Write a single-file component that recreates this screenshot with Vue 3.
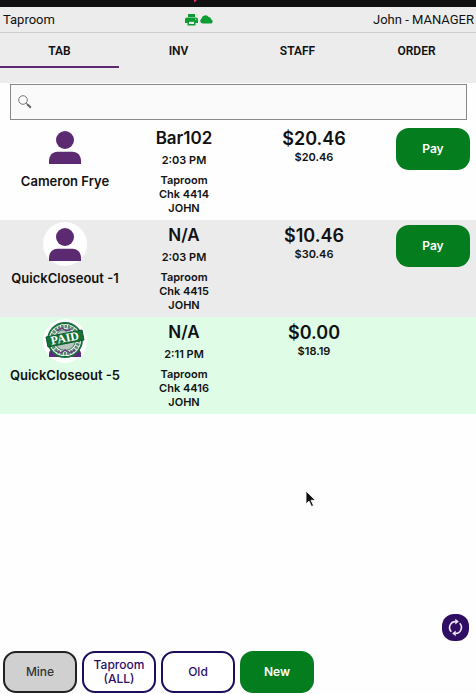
<script setup>
import { ref } from "vue";

const tabs = ["TAB", "INV", "STAFF", "ORDER"];
const activeTab = ref("TAB");
const search = ref("");
const filter = ref("Mine");

const checks = [
  { id: 4414, name: "Cameron Frye", table: "Bar102", time: "2:03 PM", due: "$20.46", total: "$20.46", paid: false },
  { id: 4415, name: "QuickCloseout -1", table: "N/A", time: "2:03 PM", due: "$10.46", total: "$30.46", paid: false },
  { id: 4416, name: "QuickCloseout -5", table: "N/A", time: "2:11 PM", due: "$0.00", total: "$18.19", paid: true },
];
</script>

<template>
  <div class="page">
    <div class="status">
      <svg width="4" height="2" viewBox="0 0 4 2"><path d="M0 0h3L1 2H0z" fill="#d8326c" /></svg>
    </div>
    <header class="header">
      <span>Taproom</span>
      <span class="header-icons">
        <svg width="13" height="12" viewBox="0 0 13 12" fill="#0c9c35">
          <path d="M3 0h7v3H3zM2 3.600h9a2 2 0 0 1 2 2V9h-2.500V7h-8v2H0V5.600a2 2 0 0 1 2-2zM2.500 7h8v4.500h-8z" />
          <path d="M4 7.800h5V10H4z" fill="#ececec" />
          <circle cx="10.700" cy="5.300" r=".6" fill="#ececec" />
        </svg>
        <svg width="13" height="9" viewBox="0 0 13 9" fill="#0c9c35">
          <path d="M3 8.500A2.600 2.600 0 0 1 1.500 3.700 4 4 0 0 1 8.700 2a2.700 2.700 0 0 1 2.500 2.600A2 2 0 0 1 11 8.500z" />
        </svg>
      </span>
      <span class="user">John - MANAGER</span>
    </header>

    <nav class="tabs">
      <button
        v-for="tab in tabs"
        :key="tab"
        :class="['tab', { active: activeTab === tab }]"
        @click="activeTab = tab"
      >
        {{ tab }}
      </button>
    </nav>

    <label class="search">
      <svg width="14" height="14" viewBox="0 0 14 14" fill="none">
        <circle cx="5" cy="5" r="4.300" stroke="#777" stroke-width="1" />
        <path d="M8.200 8.200l1.500 1.500" stroke="#777" stroke-width="1" />
        <path d="M9.700 9.700l2.500 2.300" stroke="#666" stroke-width="2.200" stroke-linecap="round" />
      </svg>
      <input v-model="search" type="text" aria-label="Search" />
    </label>

    <main class="list">
      <section v-for="check in checks" :key="check.id" :class="['row', { paid: check.paid }]">
        <div class="customer">
          <div class="avatar">
            <svg v-if="!check.paid" width="44" height="44" viewBox="0 0 44 44" fill="#5c2a70">
              <circle cx="22" cy="15" r="9" />
              <path d="M6 39v-3c0-5.500 3.500-9.300 8.500-9.300h15c5 0 8.500 3.800 8.500 9.300v3z" />
            </svg>
            <svg v-else width="44" height="44" viewBox="0 0 44 44">
              <path d="M6 38v-4q1-4 5-5h22q4 1 5 5v4z" fill="#5c2a80" />
              <circle cx="22" cy="21" r="17" fill="#f4f7f4" stroke="#16713a" stroke-width="1.800" />
              <circle cx="22" cy="21" r="13.500" fill="none" stroke="#5d8a73" stroke-width="3.500" stroke-dasharray="2.500 .8" />
              <circle cx="22" cy="21" r="10.500" fill="#b4c6bd" stroke="#3f7458" stroke-width="1" />
              <path d="M14 12l5-3 4 3 5-2M13 32l5 2 4-3 5 3 5-3" fill="none" stroke="#674680" stroke-width="1.500" />
              <path d="M3 18l36-7 2 10-36 7z" fill="#147239" stroke="#075b29" />
              <text x="22" y="23" text-anchor="middle" transform="rotate(-11 22 20)" class="stamp">PAID</text>
            </svg>
          </div>
          <div class="name">{{ check.name }}</div>
        </div>
        <div class="details">
          <div class="table-name">{{ check.table }}</div>
          <div class="time">{{ check.time }}</div>
          <div class="meta">
            <div>Taproom</div>
            <div>Chk {{ check.id }}</div>
            <div>JOHN</div>
          </div>
        </div>
        <div class="amounts">
          <div class="due">{{ check.due }}</div>
          <div class="total">{{ check.total }}</div>
        </div>
        <button v-if="!check.paid" class="btn green pay">Pay</button>
      </section>
    </main>

    <footer class="footer">
      <button class="refresh" aria-label="Refresh">
        <svg width="17" height="19" viewBox="0 0 17 19" fill="none" stroke="#f2e8fa" stroke-width="1.600">
          <path d="M4.300 13.800A6 6 0 0 1 8.500 3.600M12.700 5.200A6 6 0 0 1 8.500 15.400" />
          <path d="M8.500 1.300l3 2.300-3 2.300zM8.500 13.100l-3 2.300 3 2.300z" fill="#f2e8fa" stroke-width=".5" />
        </svg>
      </button>
      <div class="actions">
        <button :class="['btn', 'outline', { selected: filter === 'Mine' }]" @click="filter = 'Mine'">Mine</button>
        <button :class="['btn', 'outline', { selected: filter === 'All' }]" @click="filter = 'All'">Taproom (ALL)</button>
        <button :class="['btn', 'outline', { selected: filter === 'Old' }]" @click="filter = 'Old'">Old</button>
        <button class="btn green">New</button>
      </div>
    </footer>

    <svg class="cursor" width="12" height="18" viewBox="0 0 12 18">
      <path d="M1 1v13l3-3 2.500 5.500 2-1L6 10.300h4.300z" fill="#111" stroke="#fff" stroke-width=".8" />
    </svg>
  </div>
</template>

<style>
body {
  margin: 0;
  background-color: #fefefe;
}
</style>

<style scoped>
* {
  box-sizing: border-box;
}

.page {
  position: relative;
  display: flex;
  flex-direction: column;
  min-height: 100vh;
  background-color: #fefefe;
  color: #111;
  font-family: Inter, "Liberation Sans", sans-serif;
}

button {
  padding: 0;
  border: none;
  font-family: inherit;
  cursor: pointer;
}

.status {
  display: flex;
  justify-content: center;
  height: 7px;
  padding-right: 84px;
  background-color: #111;
}

.header {
  display: grid;
  grid-template-columns: 1fr auto 1fr;
  align-items: center;
  height: 26px;
  padding: 0 2px 0 3px;
  border-bottom: 1px solid #ccc;
  background-color: #ececec;
  font-family: Roboto, sans-serif;
  font-size: 13px;
}

.header-icons {
  display: flex;
  align-items: center;
  gap: 2px;
  padding-right: 80px;
}

.user {
  text-align: right;
}

.tabs {
  display: grid;
  grid-template-columns: repeat(4, 1fr);
  padding-bottom: 15px;
  background-color: #ececec;
}

.tab {
  height: 35px;
  padding-top: 2px;
  border-bottom: 2px solid transparent;
  background: none;
  color: #111;
  font-family: Roboto, sans-serif;
  font-size: 12px;
  font-weight: 600;
}

.tab.active {
  border-bottom-color: #5c2a70;
}

.search {
  display: flex;
  align-items: center;
  gap: 8px;
  height: 36px;
  margin: 1px 9px 3px 10px;
  padding: 0 7px;
  border: 1px solid #888;
  background-color: #fafafa;
}

.search input {
  flex: 1;
  min-width: 0;
  border: none;
  outline: none;
  background: none;
  font: inherit;
}

.row {
  display: grid;
  grid-template-columns: 130fr 108fr 152fr 80fr;
  height: 97px;
  padding-right: 6px;
  text-align: center;
}

.row:nth-child(even) {
  background-color: #ebebeb;
}

.row.paid {
  background-color: #dffce7;
}

.avatar {
  width: 44px;
  height: 44px;
  margin: 2px auto 3px;
  border-radius: 50%;
  background-color: #fefefe;
}

.avatar svg {
  display: block;
}

.stamp {
  fill: #fff;
  font-family: "Liberation Serif", serif;
  font-size: 12px;
  font-weight: 700;
}

.name {
  font-size: 13px;
  font-weight: 600;
  line-height: 18px;
}

.details,
.amounts {
  padding-top: 5px;
}

.table-name {
  font-size: 17px;
  font-weight: 600;
  line-height: 20px;
}

.time {
  margin: 5px 0;
  font-size: 11px;
  font-weight: 600;
  line-height: 15px;
}

.meta {
  font-size: 11px;
  font-weight: 600;
  line-height: 14px;
}

.due {
  font-size: 18px;
  font-weight: 600;
  line-height: 22px;
}

.total {
  font-size: 11px;
  font-weight: 600;
  line-height: 15px;
}

.btn {
  width: 74px;
  height: 42px;
  border-radius: 13px;
  font-size: 12px;
  font-weight: 500;
  line-height: 14px;
}

.green {
  background-color: #037d1d;
  color: #fff;
  font-weight: 600;
}

.pay {
  justify-self: end;
  margin-top: 5px;
}

.outline {
  border: 2px solid #1d0d5c;
  background-color: #fff;
  color: #2d0d68;
}

.outline.selected {
  border-color: #222;
  background-color: #d0d0d0;
  color: #333;
}

.footer {
  display: flex;
  flex-direction: column;
  gap: 10px;
  margin-top: auto;
  padding: 0 3px 1px;
}

.refresh {
  display: flex;
  align-items: center;
  justify-content: center;
  align-self: flex-end;
  width: 27px;
  height: 27px;
  margin-right: 4px;
  border-radius: 12px;
  background-color: #2f0d62;
}

.actions {
  display: flex;
  gap: 5px;
}

.cursor {
  position: absolute;
  top: 490px;
  left: 305px;
}
</style>
